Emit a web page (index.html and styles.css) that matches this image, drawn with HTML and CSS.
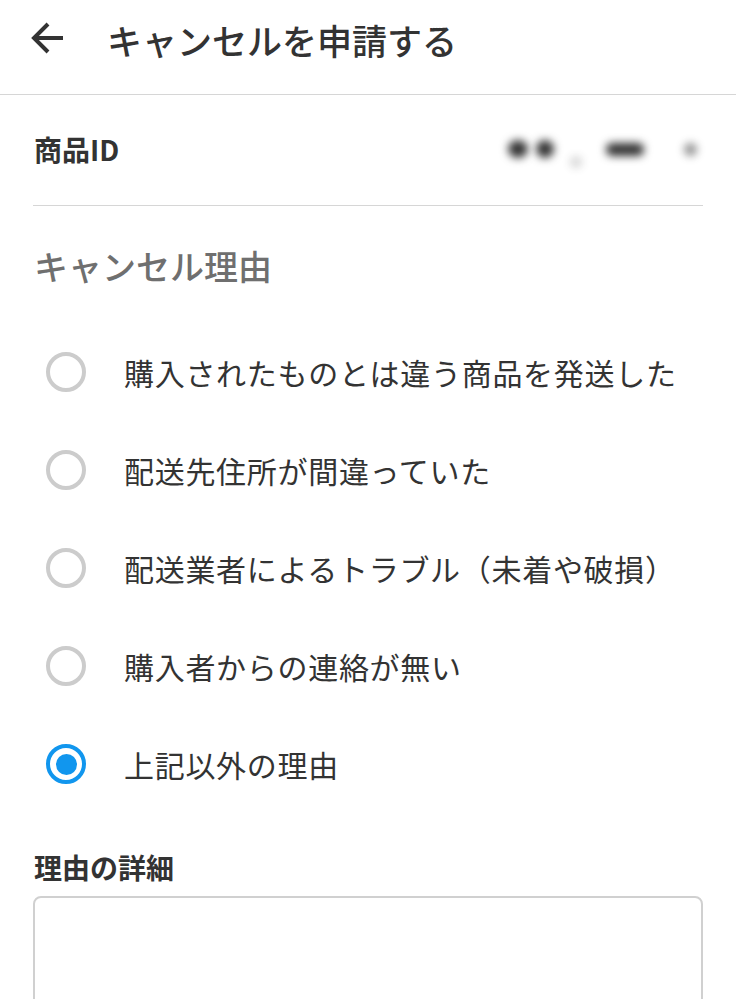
FILE: index.html
```html
<!DOCTYPE html>
<html lang="ja">
<head>
<meta charset="utf-8">
<title>キャンセルを申請する</title>
<link rel="stylesheet" href="styles.css">
</head>
<body>
<header class="app-header">
  <svg class="back-icon" width="34" height="34" viewBox="0 0 34 34" aria-hidden="true">
    <path d="M33 17H4M18 3L4 17L18 31" fill="none" stroke="#333" stroke-width="4"/>
  </svg>
  <h1 class="app-title">キャンセルを申請する</h1>
</header>
<main class="content">
  <div class="id-row">
    <span class="id-label">商品ID</span>
    <span class="id-value" aria-label="非表示">
      <i class="blob b1"></i><i class="blob b2"></i><i class="blob b3"></i><i class="blob b4"></i><i class="blob b5"></i>
    </span>
  </div>
  <h2 class="section-title">キャンセル理由</h2>
  <ul class="radio-list">
    <li class="radio-item"><span class="radio"></span><span class="radio-text">購入されたものとは違う商品を発送した</span></li>
    <li class="radio-item"><span class="radio"></span><span class="radio-text">配送先住所が間違っていた</span></li>
    <li class="radio-item"><span class="radio"></span><span class="radio-text">配送業者によるトラブル（未着や破損）</span></li>
    <li class="radio-item"><span class="radio"></span><span class="radio-text">購入者からの連絡が無い</span></li>
    <li class="radio-item"><span class="radio checked"></span><span class="radio-text">上記以外の理由</span></li>
  </ul>
  <h3 class="detail-label">理由の詳細</h3>
  <div class="textarea"></div>
</main>
</body>
</html>
```
FILE: styles.css
```css
* { box-sizing: border-box; }
html, body {
  margin: 0;
  padding: 0;
  background: #fff;
  font-family: "Noto Sans CJK JP", "Noto Sans", sans-serif;
  color: #333;
  overflow: hidden;
}
.app-header {
  height: 95px;
  border-bottom: 1px solid #d6d6d6;
  display: flex;
  align-items: center;
  padding: 0 0 16px 30px;
}
.back-icon { display: block; flex: none; margin-top: -2px; }
.app-title {
  margin: 0 0 0 43px;
  font-size: 35px;
  font-weight: 500;
  line-height: 1;
  color: #333;
}
.content { padding: 0 33px; }
.id-row {
  height: 111px;
  border-bottom: 1px solid #d6d6d6;
  display: flex;
  align-items: center;
  justify-content: space-between;
  padding-bottom: 2px;
}
.id-label {
  font-size: 28px;
  font-weight: 700;
  line-height: 1;
  margin-left: 1px;
}
.id-value {
  display: flex;
  align-items: center;
  margin-right: 6px;
}
.blob {
  display: block;
  background: #333;
  border-radius: 50%;
  filter: blur(4px);
}
.b1 { width: 20px; height: 18px; margin-right: 8px; }
.b2 { width: 18px; height: 18px; margin-right: 16px; }
.b3 { width: 12px; height: 12px; margin-top: 26px; margin-right: 24px; opacity: 0.2; }
.b4 { width: 38px; height: 13px; border-radius: 6px; margin-right: 40px; }
.b5 { width: 13px; height: 13px; opacity: 0.55; }
.section-title {
  margin: 0;
  padding-top: 43px;
  font-size: 34px;
  line-height: 34px;
  font-weight: 500;
  color: #6f6f6f;
  margin-left: 1px;
}
.radio-list {
  list-style: none;
  margin: 40px 0 0;
  padding: 0;
}
.radio-item {
  height: 98px;
  display: flex;
  align-items: center;
  padding-left: 13px;
}
.radio {
  flex: none;
  width: 40px;
  height: 40px;
  border: 4px solid #cccccc;
  border-radius: 50%;
  display: flex;
  align-items: center;
  justify-content: center;
}
.radio.checked { border-color: #1196ee; }
.radio.checked::after {
  content: "";
  width: 21px;
  height: 21px;
  border-radius: 50%;
  background: #1196ee;
}
.radio-text {
  margin-left: 38px;
  font-size: 30px;
  line-height: 1;
  color: #333;
  letter-spacing: 0.7px;
}
.detail-label {
  margin: 40px 0 0 1px;
  font-size: 28px;
  line-height: 28px;
  font-weight: 700;
}
.textarea {
  margin-top: 15px;
  height: 220px;
  border: 2px solid #d0d0d0;
  border-radius: 8px;
}
```
